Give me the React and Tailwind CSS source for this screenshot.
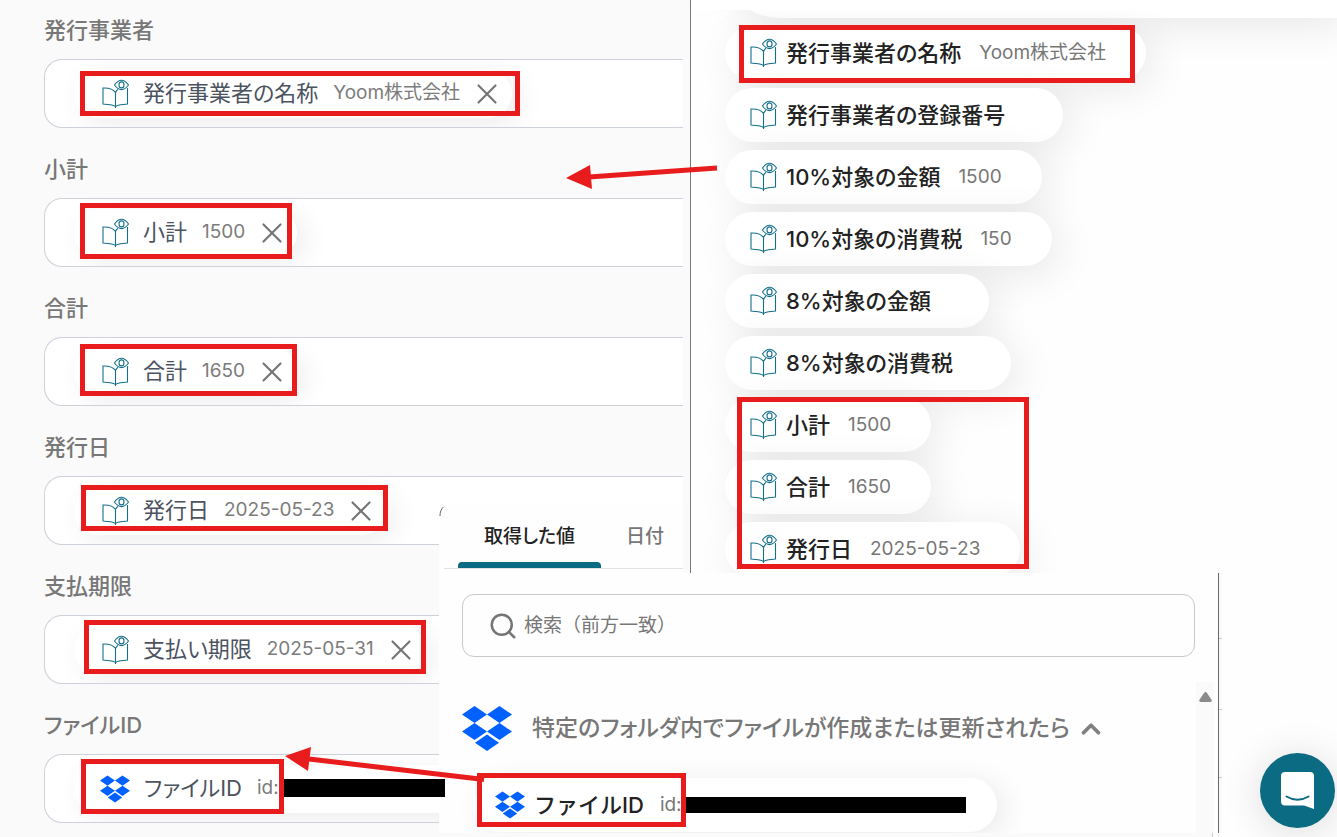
import { ChevronUp, Search, X } from "lucide-react";

// Mapping screen: form fields on the left, values that can be picked on the right,
// with the value picker opened on top and the tutorial marks over everything.

const fields = [
  { id: "issuer", label: "発行事業者", name: "発行事業者の名称", value: "Yoom株式会社", mark: "left-[35px] top-[11px] h-[45px] w-[440px]" },
  { id: "subtotal", label: "小計", name: "小計", value: "1500", mark: "left-[35px] top-1 h-[56px] w-[212px]" },
  { id: "total", label: "合計", name: "合計", value: "1650", mark: "left-[35px] top-[6px] h-[52px] w-[217px]" },
  { id: "issued", label: "発行日", name: "発行日", value: "2025-05-23", mark: "left-[36px] top-2 h-[46px] w-[307px]" },
  { id: "due", label: "支払期限", name: "支払い期限", value: "2025-05-31", mark: "left-[39px] top-1 h-[54px] w-[342px]" },
  { id: "file", label: "ファイルID", name: "ファイルID", value: "id:", dropbox: true, mark: "left-[36px] top-1 h-[55px] w-[203px]" },
];

const outputs = [
  { name: "発行事業者の名称", value: "Yoom株式会社" },
  { name: "発行事業者の登録番号" },
  { name: "10%対象の金額", value: "1500" },
  { name: "10%対象の消費税", value: "150" },
  { name: "8%対象の金額" },
  { name: "8%対象の消費税" },
  { name: "小計", value: "1500" },
  { name: "合計", value: "1650" },
  { name: "発行日", value: "2025-05-23" },
];

function BookIcon() {
  return (
    <svg viewBox="0 0 27 30" className="h-[30px] w-[27px] shrink-0" fill="none" stroke="#14708a" strokeWidth="1.1">
      <path d="M13.5 27.5C11 25.500 6 25.800 1 25V9C7 8.800 11 9.500 13.500 13.500V29M13.500 13.500C14.200 12 15 11 16 10.300M25.500 9V25C21 25.800 16 25.500 13.500 27.500" />
      <path d="M12.500 6C15 2.500 17 1.200 19.500 1.200S24 2.500 26.500 6C24 9.500 22 10.600 19.500 10.600S15 9.500 12.500 6Z" />
      <ellipse cx="19.500" cy="5.900" rx="2.500" ry="3" />
    </svg>
  );
}

function DropboxIcon({ className }) {
  return (
    <svg viewBox="0 0 50 45" className={className} fill="#0061ff">
      <path d="M12.500 0L25 8.500L12.500 17L0 8.500ZM37.500 0L50 8.500L37.500 17L25 8.500ZM12.500 17L25 25.500L12.500 34L0 25.500ZM37.500 17L50 25.500L37.500 34L25 25.500ZM25 28.500L37 36.800L25 45L13 36.800Z" />
    </svg>
  );
}

function Mark({ className }) {
  return <div className={`pointer-events-none absolute z-10 border-[5px] border-[#e81c1c] ${className}`} />;
}

function Field({ field }) {
  return (
    <div className="flex flex-col gap-[13px]">
      <label htmlFor={field.id} className="text-[22px] leading-8 font-medium text-[#777777]">
        {field.label}
      </label>
      <div className="relative flex h-[69px] items-center overflow-hidden rounded-l-[18px] border border-r-0 border-[#cdd1d9] bg-white pl-[29px]">
        <div className="flex h-12 shrink-0 items-center rounded-full bg-white pr-2 pl-7 whitespace-nowrap shadow-[8px_6px_28px_rgba(0,0,0,0.08)]">
          {field.dropbox ? <DropboxIcon className="-ml-0.5 h-7 w-[30px] shrink-0" /> : <BookIcon />}
          <span className="ml-[14px] text-[22px] text-[#4b5360]">{field.name}</span>
          <span className="ml-[15px] text-[19px] text-[#7c7c7c]">{field.value}</span>
          {field.dropbox ? (
            <span className="w-[200px]" />
          ) : (
            <button type="button" aria-label={`${field.name}を削除`} className="ml-[10px]">
              <X className="size-[34px] text-[#757575]" strokeWidth={1.5} />
            </button>
          )}
        </div>
        <input id={field.id} className="min-w-0 flex-1 bg-transparent outline-none" />
        <Mark className={field.mark} />
      </div>
    </div>
  );
}

function OutputChip({ output }) {
  return (
    <button
      type="button"
      className="flex h-[54px] shrink-0 items-center rounded-full bg-white pr-10 pl-[25px] whitespace-nowrap shadow-[8px_8px_40px_rgba(0,0,0,0.09)]"
    >
      <BookIcon />
      <span className="ml-[9px] text-[22px] font-medium text-[#222222]">{output.name}</span>
      <span className="ml-[18px] text-[19px] text-[#777777]">{output.value}</span>
    </button>
  );
}

function ValuePicker() {
  return (
    <div className="absolute top-[505px] left-[439px] w-[783px]">
      <div className="relative h-[68px] w-[244px] bg-[#fefefe] pt-2 pl-[5px]">
        <svg viewBox="0 0 6 12" className="absolute top-0 left-0 h-3 w-[6px]" fill="none" stroke="#666666">
          <path d="M1 11C1 7 2 4 4.500 2" />
        </svg>
        <div role="tablist" className="flex h-14 border-b border-[#e2e2e2] pl-[14px] text-[19px] font-medium">
          <button type="button" role="tab" aria-selected="true" className="flex w-[143px] flex-col items-center justify-end text-[#222222]">
            <span className="pb-[11px] leading-7">取得した値</span>
            <span className="h-[6px] w-full rounded-t bg-[#0b6b82]" />
          </button>
          <button type="button" role="tab" aria-selected="false" className="ml-[25px] pb-[7px] text-[#777777]">
            <span className="leading-7">日付</span>
          </button>
        </div>
      </div>
      <div className="flex">
        <div className="relative flex h-[260px] w-[780px] flex-col overflow-hidden border-r border-[#666666] bg-[#fefefe] pt-[21px] pl-[23px]">
          <label className="flex h-[63px] w-[733px] items-center gap-[6px] rounded-xl border border-[#c9c9c9] pr-4 pl-[25px]">
            <Search className="size-[30px] text-[#757575]" strokeWidth={2} />
            <input
              aria-label="検索"
              placeholder="検索（前方一致）"
              className="min-w-0 flex-1 bg-transparent pt-[2px] text-[19px] outline-none [font-feature-settings:normal] placeholder:text-[#777777]"
            />
          </label>
          <div className="flex justify-between pt-[25px] pr-1">
            <div className="flex flex-col gap-[27px] pt-6">
              <button type="button" className="flex h-[45px] items-center whitespace-nowrap">
                <DropboxIcon className="h-[45px] w-[50px] shrink-0" />
                <span className="ml-5 text-[23px] font-medium text-[#777777]">特定のフォルダ内でファイルが作成または更新されたら</span>
                <ChevronUp className="ml-[6px] size-[30px] text-[#808080]" strokeWidth={3} />
              </button>
              <button
                type="button"
                className="ml-[11px] flex h-[54px] w-[524px] items-center rounded-full bg-white pl-[22px] whitespace-nowrap shadow-[8px_4px_28px_rgba(0,0,0,0.08)]"
              >
                <DropboxIcon className="h-7 w-[30px] shrink-0" />
                <span className="ml-[9px] text-[22px] font-medium text-[#222222] [font-feature-settings:normal]">ファイルID</span>
                <span className="ml-4 text-[19px] text-[#777777]">id:</span>
                <span className="ml-1 h-4 w-[280px] bg-black" />
              </button>
            </div>
            <div className="flex h-[151px] w-[18px] justify-center bg-[#fafafa] pt-[10px]">
              <svg viewBox="0 0 13 10" className="h-[10px] w-[13px]" fill="#8a8a8a">
                <path d="M5 1Q6.500-1 8 1L12.700 8Q13 10 11.500 10H1.500Q0 10 .3 8Z" />
              </svg>
            </div>
          </div>
          <Mark className="top-[200px] left-[38px] h-[54px] w-[209px]" />
        </div>
        <div className="flex w-[3px] flex-col bg-[#fafafa] pt-[65px]">
          <span className="h-[71px] border-t border-[#cccccc]" />
          <span className="h-[68px] border-t border-[#cccccc]" />
          <span className="border-t border-[#cccccc]" />
        </div>
      </div>
      <div className="h-1 w-[774px] border-r border-[#cccccc] bg-[#fafafa]" />
    </div>
  );
}

function Arrows() {
  return (
    <svg width="760" height="830" className="pointer-events-none absolute top-0 left-0" fill="#e81c1c" stroke="#e81c1c">
      <path d="M717 168L589 177" strokeWidth="5" />
      <path d="M566 178L590 165L592 189Z" stroke="none" />
      <path d="M484 779.500L309 759" strokeWidth="5" />
      <path d="M285 756L311 747L308 771Z" stroke="none" />
    </svg>
  );
}

export default function App() {
  return (
    <div className="relative flex min-h-screen overflow-hidden bg-[#fefefe] font-['Inter','Noto_Sans_CJK_JP',sans-serif] [font-feature-settings:'palt']">
      <main className="flex w-[691px] shrink-0 flex-col gap-[25px] border-r border-[#777777] bg-[#fafafa] pt-[14px] pr-[7px] pl-11">
        {fields.map((field) => (
          <Field key={field.id} field={field} />
        ))}
      </main>

      <aside className="relative flex h-[573px] min-w-0 flex-1 flex-col items-start gap-2 overflow-hidden pl-[34px]">
        <div className="-mt-9 h-[54px] w-full shrink-0 rounded-bl-full bg-white shadow-[8px_8px_40px_rgba(0,0,0,0.09)]" />
        {outputs.map((output) => (
          <OutputChip key={output.name} output={output} />
        ))}
        <div className="absolute top-0 left-0 h-[10px] w-full bg-white" />
        <Mark className="top-[25px] left-12 h-[58px] w-[396px]" />
        <Mark className="top-[397px] left-[46px] h-[172px] w-[292px]" />
      </aside>

      <ValuePicker />
      <div className="absolute top-[779px] left-[283px] h-[18px] w-[162px] bg-black" />
      <Arrows />

      <button
        type="button"
        aria-label="チャットを開く"
        className="fixed right-[2px] bottom-[9px] flex size-[75px] items-center justify-center rounded-full bg-[#0b6b82] shadow-[0_4px_40px_rgba(0,0,0,0.14)]"
      >
        <svg viewBox="0 0 33 37" className="h-[37px] w-[33px]">
          <path d="M4 0H29Q33 0 33 4V37L23 33.500H4Q0 33.500 0 29.500V4Q0 0 4 0Z" fill="white" />
          <path d="M5.500 24.500Q16.500 31 27.500 24.500" fill="none" stroke="#0b6b82" strokeWidth="2" strokeLinecap="round" />
        </svg>
      </button>
    </div>
  );
}
